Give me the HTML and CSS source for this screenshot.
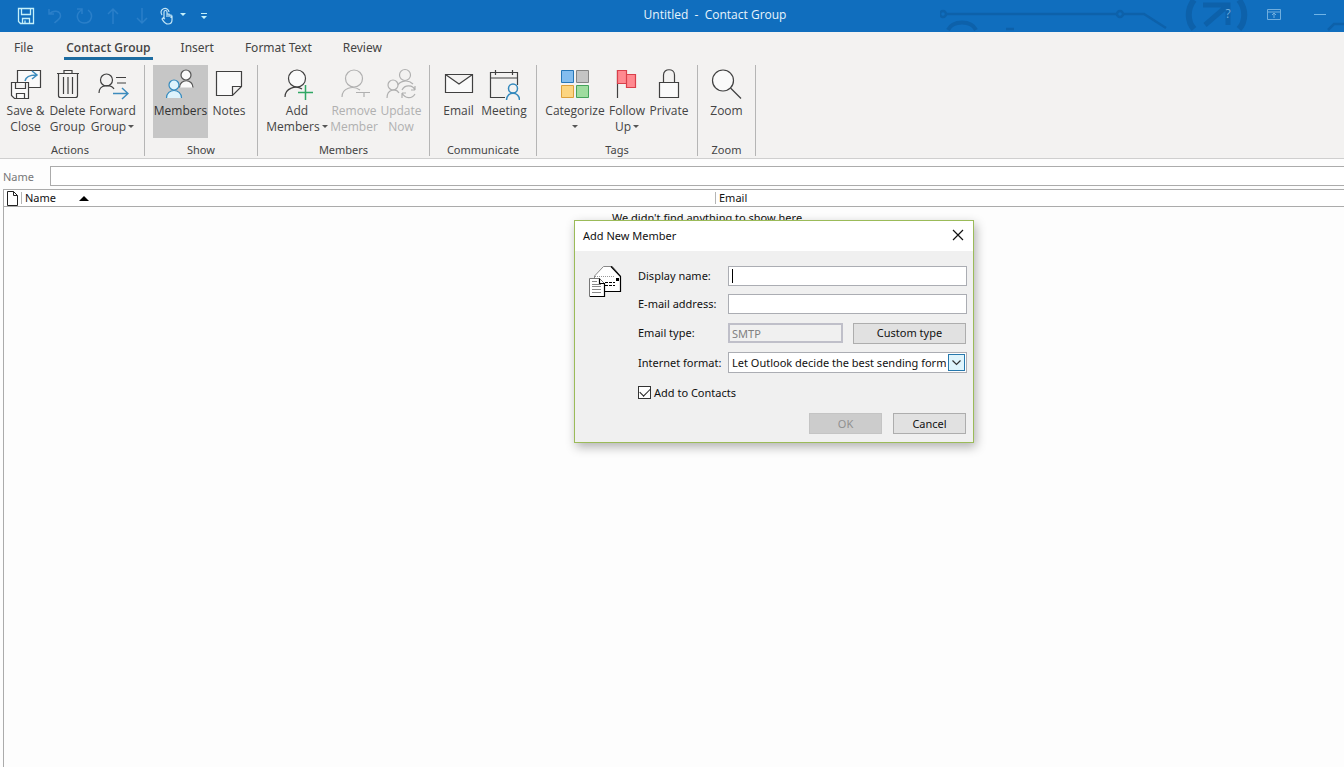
FILE: index.html
```html
<!DOCTYPE html>
<html lang="en">
<head>
<meta charset="utf-8">
<title>Untitled - Contact Group</title>
<link rel="stylesheet" href="styles.css">
</head>
<body>
<header class="titlebar">
  <svg class="circuit" width="404" height="32" viewBox="0 0 404 32" fill="none" stroke="#0d61aa" stroke-width="2.500" aria-hidden="true">
    <circle cx="3" cy="14" r="3"/><path d="M7 14H176M184 14h20l22 14"/><circle cx="180" cy="14" r="3"/>
    <path d="M8 30c5-10 23-10 28 0" stroke-width="4"/><path d="M66 29h8"/>
    <path d="M254 0c-7 9-7 21 0 29M299 0c7 9 7 21 0 29" stroke-width="6"/>
    <path d="M263 5h25v20M287 6l-22 19" stroke-width="5"/><path d="M388 30l6-6h12"/>
  </svg>
  <div class="quick">
    <button class="qbtn" aria-label="Save"><svg width="18" height="18" viewBox="0 0 18 18" fill="none" stroke="#c4f0fa" stroke-width="1.3"><path d="M1.500 1.500h15v15h-13l-2-2zM4.500 1.500v6h9v-6M5.500 16.500v-5h7v5M8 16v-2.500"/></svg></button>
    <button class="qbtn dim" aria-label="Undo"><svg width="18" height="18" viewBox="0 0 18 18" fill="none" stroke="currentColor" stroke-width="1.500"><path d="M3 2v5h5M3.500 7c3-4 11-4 11 2 0 3-3 4-6 7"/></svg></button>
    <button class="qbtn dim" aria-label="Redo"><svg width="18" height="18" viewBox="0 0 18 18" fill="none" stroke="currentColor" stroke-width="1.500"><path d="M2 2h5v5M6.500 3C-1 8 3 16 9 16c8 0 10-9 4-13"/></svg></button>
    <button class="qbtn dim" aria-label="Previous"><svg width="18" height="18" viewBox="0 0 18 18" fill="none" stroke="currentColor" stroke-width="1.500"><path d="M9 17V2M4 7l5-5 5 5"/></svg></button>
    <button class="qbtn dim" aria-label="Next"><svg width="18" height="18" viewBox="0 0 18 18" fill="none" stroke="currentColor" stroke-width="1.500"><path d="M9 1v15M4 11l5 5 5-5"/></svg></button>
    <button class="qbtn touch" aria-label="Touch mode"><svg width="28" height="18" viewBox="0 0 28 18" fill="none" stroke="#c4e6f6" stroke-width="1.200"><path d="M3 8a4 4 0 1 1 7-3M5 11V5a1.500 1.500 0 0 1 3 0v5-3h2v3-2h2v3-2h1v4c0 3-2 4-4 4-3 0-4-2-6-5l1-1 2 1"/><path d="M21 6h6l-3 3z" fill="#c4f0fa" stroke="none"/></svg></button>
    <button class="qbtn more" aria-label="Customize toolbar"><svg width="8" height="9" viewBox="0 0 8 9" fill="#c4f0fa"><path d="M1 1h6v1H1zM1 4h6L4 7z"/></svg></button>
  </div>
  <h1 class="title">Untitled&nbsp; -&nbsp; Contact Group</h1>
  <div class="winctl">
    <button class="wbtn" aria-label="Help">?</button>
    <button class="wbtn" aria-label="Ribbon display options"><svg width="14" height="11" viewBox="0 0 14 11" fill="none" stroke="#70aede"><path d="M.5.5h13v10H.5zM.5 3h13M7 9V4M5 6l2-2 2 2"/></svg></button>
    <button class="wbtn" aria-label="Minimize"><svg width="12" height="3" viewBox="0 0 12 3"><path d="M0 1h12v1H0z" fill="#70b4e6"/></svg></button>
  </div>
</header>

<nav class="tabs">
  <button class="tab">File</button>
  <button class="tab active">Contact Group</button>
  <button class="tab">Insert</button>
  <button class="tab">Format Text</button>
  <button class="tab">Review</button>
</nav>

<section class="ribbon">
  <div class="group actions">
    <div class="tools">
      <button class="tool"><svg width="32" height="32" viewBox="0 0 32 32" fill="#fafafa" stroke="#404040" stroke-width="1.200"><path d="M7.500 14V2.500h23v17H18"/><path d="M1.500 14.500h17v16h-14l-3-3zM5.500 14.500v6h10v-6M6.500 30.500v-5h8v5"/><path d="M15 13c1-5 5-6 11-6M22 3l5 4-5 4" fill="none" stroke="#3c8bbd" stroke-width="1.500"/></svg><span>Save &amp;<br>Close</span></button>
      <button class="tool"><svg width="32" height="32" viewBox="0 0 32 32" fill="none" stroke="#404040" stroke-width="1.200"><path d="M6.500 5.500v22q0 2 2 2h15q2 0 2-2v-22M5 5.500h22M12 5V2.500h8V5M11.500 9v17M16 9v17M20.500 9v17"/></svg><span>Delete<br>Group</span></button>
      <button class="tool"><svg width="32" height="32" viewBox="0 0 32 32" fill="none" stroke="#404040" stroke-width="1.200"><circle cx="9.500" cy="12" r="6"/><path d="M2 25c0-9 12-9 15-4M19 9.500h10M20 15h9"/><path d="M16 25.500h14M25 20l6 5.500-6 5.500" stroke="#3c8bbd" stroke-width="1.500"/></svg><span>Forward<br>Group <i class="caret"></i></span></button>
    </div>
    <h2 class="gname">Actions</h2>
  </div>
  <div class="group show">
    <div class="tools">
      <button class="tool pressed" aria-pressed="true"><svg width="32" height="32" viewBox="0 0 32 32" stroke-width="1.200"><g fill="#fafafa" stroke="#555"><circle cx="21" cy="7" r="5"/><path d="M14.500 19.500c0-9 13.500-9 13.500 0"/></g><g fill="#def3fc" stroke="#3389bd"><circle cx="9" cy="17" r="5"/><path d="M1.500 30c0-10 15-10 15 0"/></g></svg><span>Members</span></button>
      <button class="tool"><svg width="32" height="32" viewBox="0 0 32 32" fill="#fafafa" stroke="#404040" stroke-width="1.200"><path d="M3.500 3.500h25v15l-9 9h-16zM28.500 18.500h-9v9"/></svg><span>Notes</span></button>
    </div>
    <h2 class="gname">Show</h2>
  </div>
  <div class="group members">
    <div class="tools">
      <button class="tool"><svg width="32" height="32" viewBox="0 0 32 32" fill="none" stroke="#404040" stroke-width="1.200"><circle cx="16" cy="10.500" r="8.500" fill="#fafafa"/><path d="M4 29c0-9 11-12 17-8"/><path d="M17 24.500h15M24.500 17v15" stroke="#2fa764" stroke-width="1.500"/></svg><span>Add<br>Members <i class="caret"></i></span></button>
      <button class="tool" disabled><svg width="32" height="32" viewBox="0 0 32 32" fill="none" stroke="#b0b0b0" stroke-width="1.200"><circle cx="16" cy="10.500" r="8.500"/><path d="M4 29c0-9 11-12 18-7M18 24.500h14M26 24v5"/></svg><span>Remove<br>Member</span></button>
      <button class="tool" disabled><svg width="32" height="32" viewBox="0 0 32 32" fill="none" stroke="#b0b0b0" stroke-width="1.200"><circle cx="20" cy="7" r="5.500"/><circle cx="8" cy="17" r="5"/><path d="M13 17c2-4 10-6 15-1M2 30c0-9 9-10 12-5M17 22c3-6 11-5 13 0v-4M30 22h-4M30 26c-3 5-10 5-13-1v5M17 25h4"/></svg><span>Update<br>Now</span></button>
    </div>
    <h2 class="gname">Members</h2>
  </div>
  <div class="group communicate">
    <div class="tools">
      <button class="tool"><svg width="32" height="32" viewBox="0 0 32 32" fill="#fafafa" stroke="#404040" stroke-width="1.200"><path d="M2.500 6.500h27v18h-27zM2.500 6.500L16 16l13.500-9.500"/></svg><span>Email</span></button>
      <button class="tool"><svg width="32" height="32" viewBox="0 0 32 32" fill="none" stroke="#404040" stroke-width="1.200"><path d="M17 29.500H2.500v-25h27V17M2.500 10h27M7.500 2v5M24.500 2v5"/><g stroke="#3389bd" stroke-width="1.500"><circle cx="25" cy="20.500" r="4.500"/><path d="M18.500 32c0-9 13-9 13 0"/></g></svg><span>Meeting</span></button>
    </div>
    <h2 class="gname">Communicate</h2>
  </div>
  <div class="group tags">
    <div class="tools">
      <button class="tool"><svg width="32" height="32" viewBox="0 0 32 32"><path d="M2.500 2.500h12v12h-12z" fill="#83bdef" stroke="#2677b8"/><path d="M17.500 2.500h12v12h-12z" fill="#c4c4c4" stroke="#858585"/><path d="M2.500 17.500h12v12h-12z" fill="#fcd581" stroke="#dca03c"/><path d="M17.500 17.500h12v12h-12z" fill="#9fdc9f" stroke="#45a35b"/></svg><span>Categorize<br><i class="caret"></i></span></button>
      <button class="tool"><svg width="32" height="32" viewBox="0 0 32 32"><path d="M6.500 2v28" stroke="#404040" stroke-width="1.200"/><path d="M6.500 2.500h9v4h9v13h-9v-4h-9zM15.500 6v10" fill="#ff8990" stroke="#d9404b" stroke-width="1.200"/></svg><span>Follow<br>Up <i class="caret"></i></span></button>
      <button class="tool"><svg width="32" height="32" viewBox="0 0 32 32" fill="none" stroke="#404040" stroke-width="1.200"><path d="M6.500 14.500h19v15h-19z" fill="#fafafa"/><path d="M10.500 14.500V7c0-7 11-7 11 0v7.500"/></svg><span>Private</span></button>
    </div>
    <h2 class="gname">Tags</h2>
  </div>
  <div class="group zoom">
    <div class="tools">
      <button class="tool"><svg width="32" height="32" viewBox="0 0 32 32" fill="#fafafa" stroke="#404040" stroke-width="1.200"><circle cx="13" cy="12.500" r="10.500"/><path d="M20.500 20L31 30.500"/></svg><span>Zoom</span></button>
    </div>
    <h2 class="gname">Zoom</h2>
  </div>
</section>

<main class="content">
  <div class="namerow">
    <label for="gname">Name</label>
    <input id="gname" type="text">
  </div>
  <table class="list">
    <thead>
      <tr>
        <th class="cicon"><svg width="13" height="15" viewBox="0 0 13 15" fill="#fff" stroke="#222"><path d="M1.500.5h6l4 4v10h-10zM7.500.5v4h4"/></svg></th>
        <th class="cname">Name<svg class="sort" width="10" height="5" viewBox="0 0 10 5"><path d="M5 0l5 5H0z"/></svg></th>
        <th class="cemail">Email</th>
      </tr>
    </thead>
    <tbody><tr><td colspan="3">We didn't find anything to show here.</td></tr></tbody>
  </table>
</main>

<form class="dialog" role="dialog" aria-labelledby="dlgtitle">
  <div class="dlghead">
    <h2 id="dlgtitle">Add New Member</h2>
    <button class="close" type="button" aria-label="Close"><svg width="12" height="12" viewBox="0 0 12 12" stroke="#111" stroke-width="1.200"><path d="M1 1l10 10M11 1L1 11"/></svg></button>
  </div>
  <div class="dlgbody">
    <svg class="mail" width="33" height="34" viewBox="0 0 33 34"><path d="M5.500 10l9-9.500h9l8 9.500v15.500h-26z" fill="#fff" stroke="#888"/><path d="M22 .5l9.500 10v15H16" fill="none" stroke="#000" stroke-width="1.200"/><path d="M6 10.500h20" stroke="#999" stroke-dasharray="1 1"/><path d="M27 12h3v3h-3z"/><path d="M16 16.500h10M16 19.500h10" stroke="#000" stroke-dasharray="3 1"/><path d="M.5 12.500h10l5 5v13H.5z" fill="#fff" stroke="#777"/><path d="M10.500 12.500v5h5v13H1" fill="none" stroke="#000" stroke-width="1.200"/><path d="M3 15.500h5M3 18.500h9M3 20.500h9M3 23.500h9M3 26.500h9" stroke="#888"/></svg>
    <div class="fields">
      <label for="dn">Display name:</label>
      <div class="field"><input id="dn" type="text"><i class="cursor"></i></div>
      <label for="em">E-mail address:</label>
      <div class="field"><input id="em" type="text"></div>
      <label for="et">Email type:</label>
      <div class="field pair"><input id="et" type="text" value="SMTP" disabled><button class="btn" type="button">Custom type</button></div>
      <label for="fmt">Internet format:</label>
      <div class="field"><select id="fmt"><option>Let Outlook decide the best sending format</option></select><span class="drop"><svg width="9" height="6" viewBox="0 0 9 6" fill="none" stroke="#333" stroke-width="1.200"><path d="M.5.5l4 4 4-4"/></svg></span></div>
    </div>
    <label class="check"><input type="checkbox" checked>Add to Contacts</label>
    <div class="buttons">
      <button class="btn" type="submit" disabled>OK</button>
      <button class="btn" type="button">Cancel</button>
    </div>
  </div>
</form>
</body>
</html>
```
FILE: styles.css
```css
* { box-sizing: border-box; }
body {
  margin: 0;
  min-height: 100vh;
  display: flex;
  flex-direction: column;
  position: relative;
  overflow: hidden;
  background: #fdfdfd;
  color: #111;
  font-family: "Noto Sans", "Open Sans", sans-serif;
  font-size: 11px;
}
button, input, select { font: inherit; color: inherit; }
button { border: 0; padding: 0; background: none; }
svg { display: block; flex: none; }
h1, h2 { margin: 0; font-size: inherit; font-weight: 400; }

.titlebar {
  position: relative;
  display: flex;
  align-items: center;
  height: 32px;
  background: #106ebe;
  color: #e8f4fc;
  font-family: "Open Sans", "Noto Sans", sans-serif;
  font-size: 12px;
}
.circuit { position: absolute; right: 0; top: 0; }
.quick { display: flex; align-items: center; width: 215px; padding-left: 11px; }
.qbtn { display: flex; justify-content: center; width: 29px; }
.dim { color: #2a7fc9; }
.touch { width: 34px; }
.more { width: 20px; margin-left: 4px; }
.title { position: relative; flex: 1; text-align: center; line-height: 16px; padding: 0 0 2px 10px; }
.winctl { position: relative; display: flex; align-items: center; width: 139px; padding-bottom: 4px; }
.wbtn { display: flex; justify-content: center; width: 46px; color: #70aede; line-height: 16px; }

.tabs {
  display: flex;
  gap: 31px;
  height: 32px;
  padding: 6px 14px 0;
  background: #f3f2f1;
  color: #444;
  font-size: 12px;
}
.tab { height: 22px; line-height: 20px; border-bottom: 3px solid transparent; white-space: nowrap; }
.tab.active {
  padding: 0 2px;
  margin-right: -3px;
  border-color: #1c6ca1;
  font-family: "Open Sans", "Noto Sans", sans-serif;
  font-weight: 600;
}

.ribbon {
  display: flex;
  height: 95px;
  background: #f3f2f1;
  border-bottom: 1px solid #cfcfcf;
  color: #444;
  font-family: "Open Sans", "Noto Sans", sans-serif;
  font-size: 12px;
}
.group {
  display: flex;
  flex-direction: column;
  justify-content: space-between;
  border-right: 1px solid #b5b5b5;
  height: 91px;
  margin-top: 1px;
}
.tools { display: flex; }
.tool {
  display: flex;
  flex-direction: column;
  align-items: center;
  height: 73px;
  padding-top: 3px;
  line-height: 16px;
  white-space: nowrap;
  flex: none;
}
.tool span { padding-top: 3px; }
.tool:disabled { color: #b0b0b0; }
.pressed { background: #c6c6c6; color: #333; }
.caret {
  display: inline-block;
  border: 3px solid transparent;
  border-top-color: #555;
  border-bottom: 0;
  vertical-align: 3px;
  margin-left: -1px;
}
.gname { font-family: "Noto Sans", sans-serif; font-size: 11px; line-height: 12px; text-align: center; }
.actions { width: 145px; }
.actions .gname { padding-right: 4px; }
.actions .tool { width: 45px; }
.actions .tools { padding-left: 3px; }
.actions .tool:nth-child(2) { width: 39px; }
.actions .tool:nth-child(3) { width: 51px; }
.show { width: 113px; }
.show .tool { width: 55px; }
.show .tools { padding-left: 8px; }
.show .tool + .tool { width: 42px; }
.members { width: 172px; }
.members .tools { padding-left: 8px; }
.members .tool { width: 62px; }
.members .tool:nth-child(2) { width: 52px; }
.members .tool:nth-child(3) { width: 42px; }
.communicate { width: 107px; }
.communicate .tools { padding-left: 8px; }
.communicate .tool { width: 41px; }
.communicate .tool + .tool { width: 50px; }
.tags { width: 161px; }
.tags .tools { padding-left: 5px; }
.tags .tool { width: 66px; }
.tags .tool:nth-child(2) { width: 38px; }
.tags .tool:nth-child(3) { width: 46px; }
.zoom { width: 58px; }
.zoom .tools { justify-content: center; }

.content { flex: 1; display: flex; flex-direction: column; }
.namerow { display: flex; align-items: center; padding: 7px 0 3px 3px; color: #777; }
.namerow label { width: 47px; }
.namerow input {
  flex: 1;
  height: 20px;
  border: 1px solid #ababab;
  border-right: 0;
  background: #fff;
}
.list {
  flex: 1;
  display: flex;
  flex-direction: column;
  margin-left: 3px;
  border-left: 1px solid #ababab;
}
.list thead tr {
  display: flex;
  align-items: center;
  height: 18px;
  border: 1px solid #ababab;
  border-width: 1px 0;
  background: #fff;
}
.list th { display: flex; align-items: center; padding: 0; font-weight: 400; }
.cname { width: 694px; gap: 23px; }
.list .cname, .list .cemail { border-left: 1px solid #b5b5b5; padding-left: 3px; height: 12px; line-height: 12px; }
.list .cicon { width: 17px; padding-left: 2px; }
.list tbody, .list tbody tr { display: block; }
.list td { display: block; padding: 3px 0 0 69px; text-align: center; line-height: 16px; }

.dialog {
  position: absolute;
  left: 574px;
  top: 220px;
  width: 400px;
  border: 1px solid #9bbb59;
  background: #f0f0f0;
  box-shadow: 2px 4px 10px rgba(0, 0, 0, 0.3);
}
.dlghead {
  display: flex;
  align-items: center;
  justify-content: space-between;
  height: 30px;
  padding: 0 9px 2px 8px;
  background: #fff;
}
.dlgbody {
  display: grid;
  grid-template-columns: 49px 1fr;
  padding: 15px 6px 8px 14px;
}
.fields {
  display: grid;
  grid-template-columns: 90px 1fr;
  row-gap: 8px;
  align-items: center;
}
.fields label { line-height: 16px; }
.field { position: relative; display: flex; height: 20px; }
.field input, .field select {
  width: 100%;
  height: 20px;
  padding: 0 3px;
  border: 1px solid #abadb3;
  border-radius: 0;
  background: #fff;
}
.field select { height: 21px; appearance: none; padding-right: 20px; overflow: hidden; }
.field:has(select) { height: 21px; }
.field.pair { display: grid; grid-template-columns: 115px 113px; gap: 10px; height: 22px; align-items: center; }
.field input:disabled { border: 2px solid #bfbfc9; padding: 0 2px; background: #f0f0f0; color: #808080; }
.cursor { position: absolute; left: 4px; top: 3px; width: 1px; height: 14px; background: #000; }
.drop {
  position: absolute;
  right: 2px;
  top: 2px;
  display: grid;
  place-items: center;
  width: 17px;
  height: 17px;
  border: 1px solid #2678ad;
  background: #dff4fc;
  pointer-events: none;
}
.check { grid-column: 2; display: flex; align-items: center; gap: 3px; margin-top: 11px; height: 16px; }
.check input {
  appearance: none;
  width: 13px;
  height: 13px;
  margin: 0;
  border: 1px solid #333;
  background: #fff;
  display: grid;
  place-items: center;
}
.check input:checked::before {
  content: "";
  width: 9px;
  height: 5px;
  border: solid #222;
  border-width: 0 0 1px 1px;
  transform: rotate(-45deg);
  margin-bottom: 3px;
}
.buttons { grid-column: 2; display: flex; justify-content: flex-end; gap: 11px; margin: 13px 1px 0 0; }
.btn { height: 21px; border: 1px solid #adadad; background: #e1e1e1; line-height: 16px; }
.btn:disabled { background: #ccc; border-color: #c4c4c4; color: #909090; }
.buttons .btn { width: 73px; }
```
